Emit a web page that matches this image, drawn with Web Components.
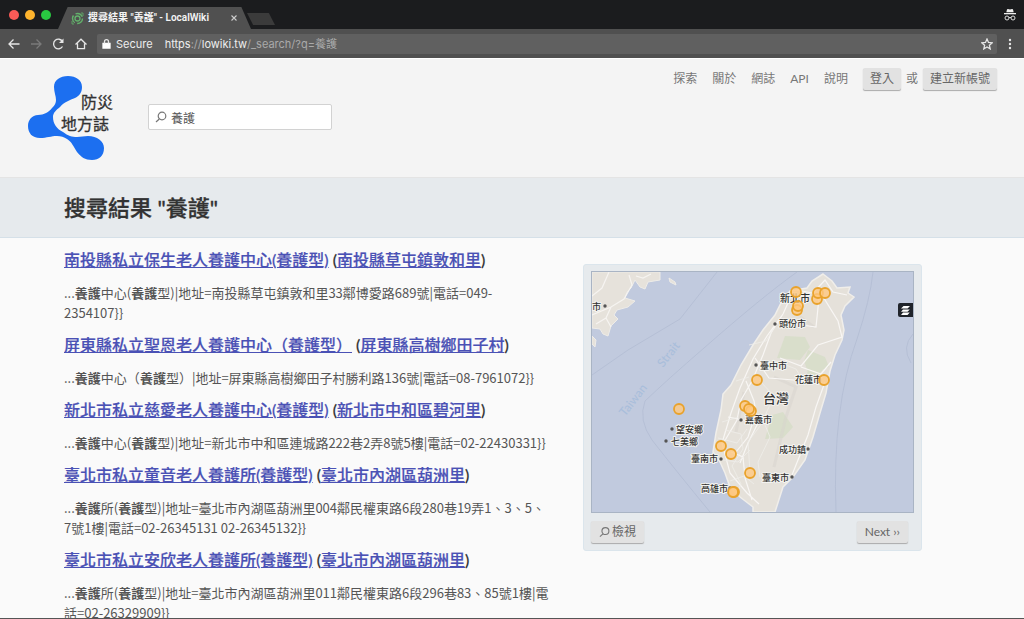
<!DOCTYPE html>
<html lang="zh-Hant">
<head>
<meta charset="utf-8">
<title>搜尋結果 "養護" - LocalWiki</title>
<style>
  body { margin: 0; font-family: Lato, "Noto Sans CJK TC", sans-serif; color: #444; }
</style>
</head>
<body>
<browser-window>
  <browser-tab slot="tabs">搜尋結果 "養護" - LocalWiki</browser-tab>
  <browser-toolbar slot="toolbar"></browser-toolbar>
  <site-header></site-header>
  <page-title>搜尋結果 "養護"</page-title>
  <search-layout>
    <search-result name="南投縣私立保生老人養護中心(養護型)" place="南投縣草屯鎮敦和里">...<strong>養護</strong>中心(<strong>養護</strong>型)|地址=南投縣草屯鎮敦和里33鄰博愛路689號|電話=049-2354107}}</search-result>
    <search-result name="屏東縣私立聖恩老人養護中心（養護型）" place="屏東縣高樹鄉田子村">...<strong>養護</strong>中心（<strong>養護</strong>型）|地址=屏東縣高樹鄉田子村勝利路136號|電話=08-7961072}}</search-result>
    <search-result name="新北市私立慈愛老人養護中心(養護型)" place="新北市中和區碧河里">...<strong>養護</strong>中心(<strong>養護</strong>型)|地址=新北市中和區連城路222巷2弄8號5樓|電話=02-22430331}}</search-result>
    <search-result name="臺北市私立童音老人養護所(養護型)" place="臺北市內湖區葫洲里">...<strong>養護</strong>所(<strong>養護</strong>型)|地址=臺北市內湖區葫洲里004鄰民權東路6段280巷19弄1、3、5、7號1樓|電話=02-26345131 02-26345132}}</search-result>
    <search-result name="臺北市私立安欣老人養護所(養護型)" place="臺北市內湖區葫洲里">...<strong>養護</strong>所(<strong>養護</strong>型)|地址=臺北市內湖區葫洲里011鄰民權東路6段296巷83、85號1樓|電話=02-26329909}}</search-result>
    <map-panel slot="aside"></map-panel>
  </search-layout>
</browser-window>

<script>
const define = (name, html) => {
  const template = document.createElement('template');
  template.innerHTML = html;
  customElements.define(name, class extends HTMLElement {
    constructor() {
      super();
      this.attachShadow({ mode: 'open' }).append(template.content.cloneNode(true));
    }
  });
};

define('browser-window', `
<style>
  :host { display: grid; grid-template-rows: 29px 29px minmax(0, 1fr); height: 100vh; box-sizing: border-box; border-bottom: 1px solid #555; }
  .strip { display: flex; background: #1b1c1e; align-items: flex-end; }
  .lights { display: flex; gap: 6px; padding: 0 7px 0 9px; align-self: center; }
  .lights button { width: 10px; height: 10px; border: 0; padding: 0; border-radius: 50%; background: #fc5b57; }
  .lights button:nth-child(2) { background: #fdb32d; }
  .lights button:nth-child(3) { background: #29c941; }
  .new { width: 28px; height: 12px; border: 0; padding: 0; margin: 0 0 4px -4px; background: #3b3b3b; clip-path: polygon(0 0, 78% 0, 100% 100%, 22% 100%); }
  .private { margin: 0 7px 0 auto; align-self: center; display: block; }
  .view { overflow-y: auto; scrollbar-width: none; background: #fafafa; }
</style>
<div class="strip">
  <div class="lights"><button aria-label="Close"></button><button aria-label="Minimize"></button><button aria-label="Zoom"></button></div>
  <slot name="tabs"></slot>
  <button class="new" aria-label="New tab"></button>
  <svg class="private" width="14" height="14" viewBox="0 0 14 14"><path d="M4 1.5Q4.3.8 5 1l2 .4L9 1q.7-.2 1 .5L10.700 4.300H3.300z" fill="#eee"/><path d="M1 5h12v1.300H1z" fill="#eee"/><g fill="none" stroke="#ddd"><circle cx="4" cy="10" r="2"/><circle cx="10" cy="10" r="2"/><path d="M6 9.700q1-.6 2 0"/></g></svg>
</div>
<slot name="toolbar"></slot>
<div class="view"><slot></slot></div>`);

define('browser-tab', `
<style>
  :host { display: flex; align-items: center; height: 22px; padding: 0 13px; box-sizing: border-box; width: 193px; background: #505050; color: #f4f4f4; font: 600 10px/22px Roboto, "Noto Sans CJK TC", sans-serif; clip-path: polygon(5% 0, 95% 0, 100% 100%, 0 100%); white-space: nowrap; }
  svg { flex: none; margin-right: 4px; }
  button { all: unset; margin-left: auto; display: flex; }
  button svg { margin: 0; }
</style>
<svg width="13" height="13" viewBox="0 0 13 13" fill="none" stroke="#62b16b"><circle cx="6.500" cy="6.500" r="2.500" stroke-width="1.300"/><circle cx="6.500" cy="6.500" r="5" stroke-dasharray="8 2.470" stroke-width="1.400"/><path d="M1 9v3h2M10 1h2v3" stroke-width=".8"/></svg>
<span><slot></slot></span>
<button aria-label="Close tab"><svg width="8" height="8" viewBox="0 0 8 8"><path d="M1.500 1.500l5 5M6.500 1.500l-5 5" stroke="#ccc" stroke-width="1.100"/></svg></button>`);

define('browser-toolbar', `
<style>
  :host { display: flex; align-items: center; gap: 8px; padding: 0 7px; background: #505050; color: #eee; font: 11px/20px Inter, "Noto Sans CJK TC", sans-serif; box-sizing: border-box; }
  button { all: unset; display: flex; }
  svg { display: block; fill: none; stroke: #e6e6e6; stroke-width: 1.300; }
  .address { flex: 1; display: flex; align-items: center; height: 20px; margin: 0 0 0 1px; padding: 0 4px; background: #606060; border-radius: 2px; }
  .secure { padding: 0 12px 0 4px; }
  .url { flex: 1; outline: 0; white-space: nowrap; }
  i { font-style: normal; color: #aaa; }
</style>
<button aria-label="Back"><svg width="14" height="14" viewBox="0 0 14 14"><path d="M12.500 7H2M6.500 2.500L2 7l4.500 4.500"/></svg></button>
<button aria-label="Forward"><svg width="14" height="14" viewBox="0 0 14 14" style="stroke:#7a7a7a"><path d="M2 7h10M7.500 2.500L12 7l-4.500 4.500"/></svg></button>
<button aria-label="Reload"><svg width="15" height="14" viewBox="0 0 15 14"><path d="M11.500 9.500a4.800 4.800 0 1 1 0-5"/><path d="M12.500 1.500v4.500H8z" fill="#e6e6e6" stroke="none"/></svg></button>
<button aria-label="Home"><svg width="14" height="14" viewBox="0 0 14 14"><path d="M1.500 7.500L7 2.200l5.500 5.300M3.500 6.500v5.200h7V6.500"/></svg></button>
<div class="address">
  <svg width="11" height="12" viewBox="0 0 11 12"><path d="M2 5.500h7V10H2z" fill="#fff" stroke="#fff"/><path d="M3.500 5.500V3.700a2 2 0 0 1 4 0v1.800"/></svg>
  <span class="secure">Secure</span>
  <div class="url" role="textbox" contenteditable="true" spellcheck="false" aria-label="Address">https<i>://</i>lowiki.tw<i>/_search/?q=養護</i></div>
  <button aria-label="Bookmark"><svg width="12" height="12" viewBox="0 0 12 12"><path d="M6 1l1.500 3.400 3.700.4-2.800 2.500.8 3.600L6 9l-3.200 1.900.8-3.600L.8 4.800l3.700-.4z"/></svg></button>
</div>
<button aria-label="Menu"><svg width="12" height="14" viewBox="0 0 12 14" style="fill:#e6e6e6;stroke:none"><circle cx="5" cy="3" r="1.200"/><circle cx="5" cy="7" r="1.200"/><circle cx="5" cy="11" r="1.200"/></svg></button>`);

define('grey-button', `
<style>
  :host { display: inline-flex; }
  button { display: flex; align-items: center; gap: 2px; height: 22px; box-sizing: border-box; border: 0; border-radius: 2px; padding: 0 var(--button-padding, 8px); background: #e2e2e2; box-shadow: 0 1px 1px #aaa; color: #666; font: inherit; font-size: 12px; line-height: 20px; white-space: nowrap; }
</style>
<button><slot></slot></button>`);

define('site-header', `
<style>
  :host { display: flex; align-items: flex-start; min-height: 120px; box-sizing: border-box; padding: 9px 27px 0; background: #f4f4f4; border-bottom: 1px solid #e4e4e4; border-top: 1px solid #fff; font-size: 12px; color: #777; }
  .logo { display: block; margin-top: 7px; }
  .logo svg { display: block; }
  .logo text { font-size: 16px; fill: #333; stroke: #333; stroke-width: .3px; }
  form { display: flex; align-items: center; gap: 4px; box-sizing: border-box; width: 184px; height: 26px; margin: 36px 0 0 32px; padding: 0 6px; background: #fff; border: 1px solid #d2d2d2; border-radius: 2px; }
  input { flex: 1; min-width: 0; border: 0; padding: 0; outline: 0; background: none; font: inherit; font-size: 12px; color: #555; }
  nav { display: flex; align-items: center; gap: 15px; margin-left: auto; line-height: 22px; }
  a { color: #777; text-decoration: none; }
  .account { display: flex; align-items: center; gap: 5px; --button-padding: 7px; }
</style>
<a class="logo" href="#"><svg width="89" height="86" viewBox="0 0 89 86">
  <path fill="#1c6ff0" d="M27 12C27 5 33 1 41 1S55 5 55 12C55 18 52 21 48 23C43 25 37 27 33 32C29 35 26 38 26 42C26 49 30 54 36 57C41 61 45 62 50 62C54 62 57 61 61 61C70 61 77 66 77 73C77 81 72 85 65 85C58 85 54 82 50 77C46 71 45 67 40 64C37 62 34 61 30 61C24 61 20 63 13 63C5 63 1 58 1 51C1 45 5 40 11 40C17 40 22 37 25 33C28 30 29 28 29 25C29 21 27 17 27 12z"/>
  <text x="54" y="33">防災</text><text x="34" y="55">地方誌</text>
</svg></a>
<form role="search"><svg width="12" height="12" viewBox="0 0 12 12" fill="none" stroke="#777" stroke-width="1.200"><circle cx="7" cy="5" r="3.800"/><path d="M4.300 8L1 11"/></svg><input aria-label="搜尋" value="養護"></form>
<nav>
  <a href="#">探索</a><a href="#">關於</a><a href="#">網誌</a><a href="#">API</a><a href="#">說明</a>
  <div class="account"><grey-button>登入</grey-button>或<grey-button>建立新帳號</grey-button></div>
</nav>`);

define('page-title', `
<style>
  :host { display: block; background: #e6eaed; border-bottom: 1px solid #d5e0e8; padding: 14px 64px 13px; }
  h1 { margin: 0; font-size: 22px; line-height: 32px; font-weight: 500; color: #333; -webkit-text-stroke: .3px #333; }
</style>
<h1><slot></slot></h1>`);

define('search-layout', `
<style>
  :host { display: grid; grid-template-columns: minmax(0, 1fr) 339px; gap: 33px; padding: 10px 102px 0 64px; align-items: start; }
  aside { padding-top: 16px; }
</style>
<main><slot></slot></main>
<aside><slot name="aside"></slot></aside>`);

{
  const template = document.createElement('template');
  template.innerHTML = `
<style>
  :host { display: block; margin-bottom: 10px; }
  h2 { margin: 0 0 11px; font-size: 16px; line-height: 24px; font-weight: 500; color: #333; white-space: nowrap; -webkit-text-stroke: .2px; }
  a { color: #4a51b5; text-decoration: underline; }
  p { margin: 0; font-family: "Noto Sans CJK TC", sans-serif; font-size: 13px; line-height: 20px; color: #555; }
</style>
<h2><a class="name" href="#"></a> (<a class="place" href="#"></a>)</h2>
<p><slot></slot></p>`;
  customElements.define('search-result', class extends HTMLElement {
    constructor() {
      super();
      this.attachShadow({ mode: 'open' }).append(template.content.cloneNode(true));
    }
    connectedCallback() {
      for (const key of ['name', 'place'])
        this.shadowRoot.querySelector('.' + key).textContent = this.getAttribute(key);
    }
  });
}

define('map-panel', `
<style>
  :host { display: block; box-sizing: border-box; padding: 6px 7px 7px; background: #e6eaed; border: 1px solid #dbe5ec; border-radius: 3px; }
  .map { position: relative; border: 1px solid #a9b4c4; }
  .map > svg { display: block; width: 100%; }
  .layers { position: absolute; right: 0; top: 31px; width: 15px; height: 14px; padding: 0; border: 0; border-radius: 2px 0 0 2px; background: #20242b; display: flex; align-items: center; justify-content: center; }
  footer { display: flex; justify-content: space-between; padding: 8px 6px 0 0; }
  .label { font-size: 9px; font-weight: 500; fill: #333; stroke: #f4f3f0; stroke-width: 2px; paint-order: stroke; stroke-linejoin: round; }
  .big { font-size: 10px; }
  .country { font-size: 13px; }
  .sea { font-size: 12px; fill: #a9bedb; }
</style>
<div class="map">
  <svg viewBox="0 0 321 240" role="img" aria-label="台灣">
    <rect width="321" height="240" fill="#c1cade"/>
    <g fill="none" stroke="#b3bdd3" stroke-width=".8"><path d="M0 103L36 78 88 47 125 0M53 129Q75 108 112 76 170 25 205 0M281 0Q278 28 265 67 240 135 244 240M53 129Q46 148 60 168 85 200 118 240M321 62Q309 75 319 91"/></g>
    <path fill="#e6e2db" stroke="#eeece8" d="M0 0H68V8L56 10 53 17 48 15 43 8 39 16 35 20 33 26 43 29 36 35 25 38 22 43 26 47 19 54 16 64 11 62 8 57 0 56zM0 64l4 4-1 7-3-3zM77 6l6 4 1 3-6-3z"/>
    <g fill="none" stroke="#f6f4f1" stroke-width="1.200"><path d="M0 24l10-8 7-16M0 43l19-8 13-8 8-14-3-10M19 35l-5 11 5 9M14 46L4 52M44 4l7 2 8-4"/></g>
    <path fill="#e5e1da" stroke="#f0eeea" stroke-width="1.500" d="M231 2L240 9 245 16 258 15 256 21 262 25 253 34 249 43 252 58 250 68 243 83 238 99 234 121 228 141 221 165 213 188 201 205 191 215 183 240H161V235L148 225 138 215 133 201 128 190 121 180 124 161 129 138 131 122 139 113 149 93 161 73 171 58 183 43 190 29 198 19 215 16 220 9z"/>
    <g fill="#d9decb"><path d="M193 64l20 1 5 10-10 13-23-2zM216 78l17 7 4 10-20 8-5-14zM180 143l11-3 10 15-10 11-18 1zM218 93l15 2-10 12-9-3z"/></g>
    <g fill="none" stroke="#d8d4cd" stroke-width="3" opacity=".5"><path d="M182 105l22 10-10 30-12 50M208 45l14 10M152 120l-8 40"/></g>
    <g fill="none" stroke="#f8f6f4" stroke-width="1.200"><path d="M222 20l11-12 8 12 14 3M200 22l-9 20-16 22-14 23-13 29-9 25-9 30 8 30 17 20 12 11M205 18l25 5 16 26 4 16-24 8-17 21-21-8M163 86l14 20 37 3M209 95l20 7 10-12M154 109l8 20 4 22-10 20-8 20M233 110l-9 25-8 28-16 40M136 145l25 5-5 15-12 15M139 180l12 5 2 21 7 22M196 51l28 4 3-29M191 42l-12 19-8 22-11 26-11 19-4 20-13 22"/></g>
    <g fill="none" stroke="#efedea" stroke-width=".8"><path d="M181 88l23 9 8 13M167 108l15 16-11 24 7 17-12 25 2 15M157 73l17-4 8-13M144 109l13-4M130 150l17-5M126 166l19 5 10-14M131 188l15 2 12-12M138 209l14-5 10 8M171 150l-15 20 2 30M133 158l16 4 2 15-11 17 9 18-4 9"/></g>
    <g class="label sea"><text transform="translate(33 145) rotate(-52)" stroke="none">Taiwan</text><text transform="translate(71 96) rotate(-52)" stroke="none">Strait</text></g>
    <g fill="#555"><circle cx="13" cy="34" r="1.700"/><circle cx="183" cy="52" r="1.700"/><circle cx="164" cy="93" r="1.700"/><circle cx="149" cy="148" r="1.700"/><circle cx="80" cy="157" r="1.700"/><circle cx="74" cy="169" r="1.700"/><circle cx="129" cy="187" r="1.700"/><circle cx="216" cy="177" r="1.700"/><circle cx="200" cy="205" r="1.700"/><circle cx="138" cy="216" r="1.700"/></g>
    <g class="label">
      <text x="0" y="38">市</text><text class="big" x="188" y="30">新北市</text><text x="187" y="55">頭份市</text><text x="168" y="97">臺中市</text><text x="203" y="111">花蓮市</text>
      <text class="country" x="171" y="131">台灣</text><text x="153" y="151">嘉義市</text><text x="84" y="161">望安鄉</text><text x="79" y="173">七美鄉</text><text x="99" y="190">臺南市</text>
      <text x="187" y="181">成功鎮</text><text x="170" y="209">臺東市</text><text x="109" y="220">高雄市</text>
    </g>
    <g fill="#ffc880" fill-opacity=".8" stroke="#e9a22b" stroke-width="1.800"><circle cx="204" cy="20" r="5"/><circle cx="225" cy="27" r="5"/><circle cx="226" cy="21" r="5"/><circle cx="233" cy="21" r="5"/><circle cx="205" cy="38" r="5"/><circle cx="206" cy="34" r="5"/><circle cx="165" cy="108" r="5"/><circle cx="232" cy="108" r="5"/><circle cx="87" cy="137" r="5"/><circle cx="153" cy="134" r="5"/><circle cx="159" cy="139" r="5"/><circle cx="157" cy="137" r="5"/><circle cx="129" cy="174" r="5"/><circle cx="139" cy="182" r="5"/><circle cx="158" cy="201" r="5"/><circle cx="142" cy="220" r="5"/><circle cx="141" cy="220" r="5"/></g>
  </svg>
  <button class="layers" aria-label="Layers"><svg width="11" height="11" viewBox="0 0 11 11" fill="#fff"><path d="M3.500 1H10L7.500 3.500H1zM3 4.500h6.800L7.500 6.800H1zM3 7.500h6.800L7.500 10H1z"/></svg></button>
</div>
<footer>
  <grey-button><svg width="11" height="12" viewBox="0 0 12 12" fill="none" stroke="#777" stroke-width="1.200"><circle cx="7" cy="5" r="3.800"/><path d="M4.300 8L1 11"/></svg>檢視</grey-button>
  <grey-button>Next ››</grey-button>
</footer>`);
</script>
</body>
</html>
